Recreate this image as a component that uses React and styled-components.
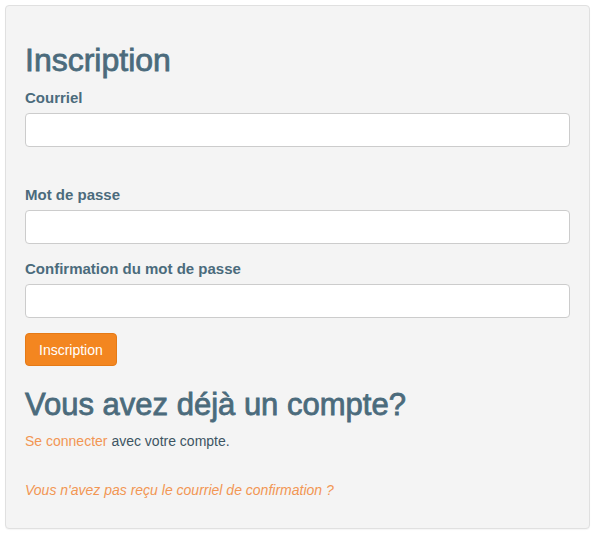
import React from 'react';
import styled, { createGlobalStyle } from 'styled-components';

const GlobalStyle = createGlobalStyle`
    html, body {
        margin: 0;
        padding: 0;
        background: #ffffff;
    }
    body {
        font-family: 'Liberation Sans', Arial, sans-serif;
    }
`;

const Page = styled.div`
    padding: 5px;
`;

const Panel = styled.div`
    box-sizing: border-box;
    width: 585px;
    min-height: 524px;
    padding: 37px 19px 26px;
    background: #f4f4f4;
    border: 1px solid #e0e0e0;
    border-radius: 4px;
    box-shadow: 0 1px 1px rgba(0, 0, 0, 0.04);
    color: #4b6b7c;
`;

const Title = styled.h1`
    margin: 0 0 ${p => p.$gap || 14}px;
    font-size: ${p => p.$size || 32}px;
    line-height: 1.1;
    font-weight: 400;
    -webkit-text-stroke: 0.8px currentColor;
    color: #4b6b7c;
`;

const Field = styled.div`
    margin-bottom: ${p => p.$gap || 15}px;
`;

const Label = styled.label`
    display: block;
    margin-bottom: 5px;
    font-size: 15px;
    line-height: 20px;
    font-weight: 700;
    color: #4b6b7c;
`;

const Input = styled.input`
    box-sizing: border-box;
    display: block;
    width: 100%;
    height: 34px;
    padding: 6px 12px;
    background: #ffffff;
    border: 1px solid #cccccc;
    border-radius: 4px;
    font-family: inherit;
    font-size: 14px;
`;

const Button = styled.button`
    display: block;
    box-sizing: border-box;
    height: 33px;
    padding: 0 13px;
    margin: 1px 0 22px;
    background: #f38620;
    border: 1px solid #e57a16;
    border-radius: 4px;
    color: #ffffff;
    font-family: inherit;
    font-size: 14px;
    cursor: pointer;
`;

const Text = styled.p`
    margin: 0 0 ${p => p.$gap || 0}px;
    font-size: 14px;
    line-height: 20px;
    color: #3d5563;
    font-style: ${p => (p.$italic ? 'italic' : 'normal')};
`;

const Link = styled.a`
    color: #f29653;
    text-decoration: none;
`;

const App = () => (
    <Page>
        <GlobalStyle />
        <Panel>
            <Title $gap={10}>Inscription</Title>
            <Field $gap={38}>
                <Label>Courriel</Label>
                <Input type="email" />
            </Field>
            <Field>
                <Label>Mot de passe</Label>
                <Input type="password" />
            </Field>
            <Field>
                <Label>Confirmation du mot de passe</Label>
                <Input type="password" />
            </Field>
            <Button>Inscription</Button>
            <Title $size={31} $gap={9}>Vous avez déjà un compte?</Title>
            <Text $gap={29}>
                <Link href="#">Se connecter</Link> avec votre compte.
            </Text>
            <Text $italic>
                <Link href="#">Vous n'avez pas reçu le courriel de confirmation ?</Link>
            </Text>
        </Panel>
    </Page>
);

export default App;
